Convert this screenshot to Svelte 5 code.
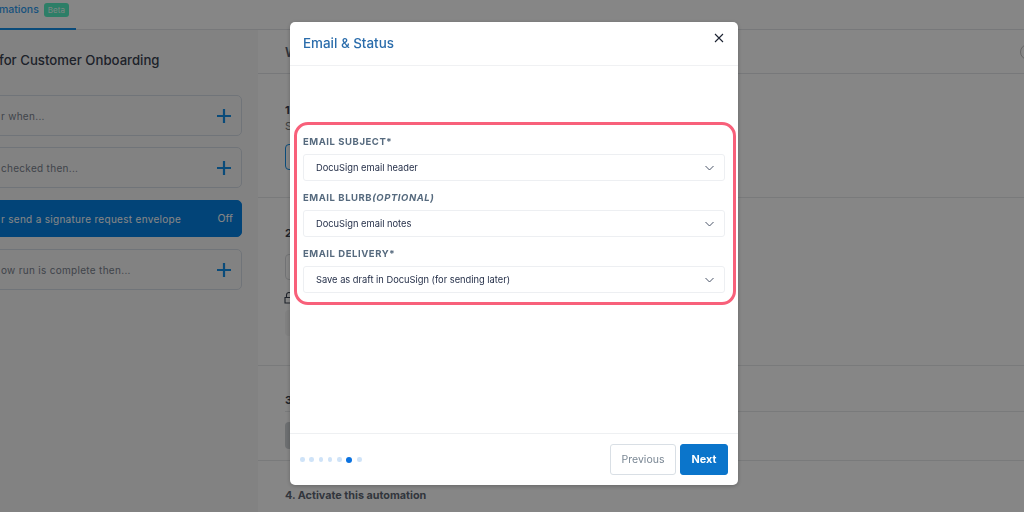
<script>
	const fields = [
		{ label: 'EMAIL SUBJECT*', value: 'DocuSign email header' },
		{ label: 'EMAIL BLURB', note: '(OPTIONAL)', value: 'DocuSign email notes' },
		{ label: 'EMAIL DELIVERY*', value: 'Save as draft in DocuSign (for sending later)' }
	];

	const rows = [
		{ text: 'r when...' },
		{ text: 'checked then...' },
		{ text: 'r send a signature request envelope', active: true },
		{ text: 'ow run is complete then...' }
	];

	const dots = [0, 1, 2, 3, 4, 5, 6];
	let current = $state(5);
</script>

<div class="page">
	<header class="tabs">
		<div class="tab">
			<span class="tab-name">mations</span>
			<span class="beta">Beta</span>
		</div>
	</header>

	<div class="columns">
		<aside class="side">
			<h2 class="side-title">for Customer Onboarding</h2>
			<div class="steps">
				{#each rows as row}
					<div class="step" class:active={row.active}>
						<span class="step-text">{row.text}</span>
						{#if row.active}
							<span class="off">Off</span>
						{:else}
							<svg class="plus" viewBox="0 0 14 14" width="14" height="14">
								<path d="M7 0v14M0 7h14" stroke="currentColor" stroke-width="2.2" fill="none" />
							</svg>
						{/if}
					</div>
				{/each}
			</div>
		</aside>

		<main class="detail">
			<div class="detail-head">
				<span class="detail-title">W</span>
				<span class="ring"></span>
			</div>
			<section class="block block-1">
				<div class="num">1</div>
				<div class="sub">S</div>
				<div class="box box-blue"></div>
			</section>
			<section class="block block-2">
				<div class="num">2</div>
				<div class="box"></div>
				<svg class="lock" viewBox="0 0 10 12" width="10" height="12">
					<path d="M1 5.5h8v5.5H1zM2.5 5.5V3a2.5 2.5 0 0 1 5 0v2.5" stroke="currentColor" stroke-width="1.1" fill="none" />
				</svg>
				<div class="box box-grey"></div>
			</section>
			<section class="block block-3">
				<div class="num">3</div>
				<div class="rule"></div>
				<div class="box box-dark"></div>
			</section>
			<section class="block block-4">
				<div class="activate">4. Activate this automation</div>
			</section>
		</main>
	</div>
</div>

<div class="overlay">
	<div class="modal">
		<div class="modal-head">
			<h1 class="modal-title">Email &amp; Status</h1>
			<button class="close" aria-label="Close">
				<svg viewBox="0 0 10 10" width="10" height="10">
					<path d="M1 1l8 8M9 1l-8 8" stroke="#1d2433" stroke-width="1.1" fill="none" />
				</svg>
			</button>
		</div>

		<div class="modal-body">
			<div class="highlight">
				{#each fields as field}
					<div class="field">
						<div class="label">{field.label}{#if field.note}<em>{field.note}</em>{/if}</div>
						<div class="select">
							<span>{field.value}</span>
							<svg viewBox="0 0 9 6" width="9" height="6">
								<path d="M0.5 1l4 4 4-4" stroke="#4a5568" stroke-width="1" fill="none" />
							</svg>
						</div>
					</div>
				{/each}
			</div>
		</div>

		<div class="modal-foot">
			<div class="dots">
				{#each dots as dot}
					<span class="dot" class:current={dot === current}></span>
				{/each}
			</div>
			<div class="actions">
				<button class="btn prev">Previous</button>
				<button class="btn next">Next</button>
			</div>
		</div>
	</div>
</div>

<style>
	:global(body) {
		margin: 0;
		background: #fff;
		font-family: Inter, 'Liberation Sans', sans-serif;
		overflow: hidden;
	}

	.page {
		width: 1024px;
		height: 512px;
		overflow: hidden;
		display: flex;
		flex-direction: column;
	}

	.tabs {
		height: 29px;
		border-bottom: 1px solid #e2e4e8;
		display: flex;
		flex-shrink: 0;
	}

	.tab {
		width: 76px;
		height: 30px;
		box-sizing: border-box;
		border-bottom: 2px solid #148fe8;
		display: flex;
		align-items: flex-start;
		gap: 5px;
		padding-top: 2px;
	}

	.tab-name {
		font-size: 10.5px;
		line-height: 15px;
		color: #2f9bee;
		font-weight: 500;
		margin-left: -1px;
	}

	.beta {
		background: #56f0c4;
		color: #f0fffa;
		font-size: 8px;
		line-height: 14px;
		padding: 0 4px;
		border-radius: 3px;
		margin-top: 1px;
	}

	.columns {
		flex: 1;
		display: flex;
		min-height: 0;
	}

	.side {
		width: 258px;
		flex-shrink: 0;
		background: #f8f8f8;
		padding-top: 20px;
		box-sizing: border-box;
	}

	.side-title {
		margin: 0 0 25px -1px;
		font-size: 13.2px;
		line-height: 20px;
		font-weight: 500;
		color: #3a4250;
		white-space: nowrap;
	}

	.steps {
		display: flex;
		flex-direction: column;
		gap: 11px;
		width: 242px;
	}

	.step {
		height: 41px;
		box-sizing: border-box;
		margin-left: -10px;
		border: 1px solid #d6dde6;
		border-radius: 5px;
		display: flex;
		align-items: center;
		justify-content: space-between;
		padding: 0 10px;
		color: #148fe8;
	}

	.step.active {
		background: #0582e4;
		border-color: #0582e4;
		height: 37px;
		margin-top: 1px;
		margin-bottom: 1px;
		color: #fff;
		padding-right: 8px;
	}

	.step-text {
		font-size: 10px;
		letter-spacing: 0.3px;
		color: #7a828e;
		white-space: nowrap;
	}

	.active .step-text {
		color: #fff;
	}

	.off {
		font-size: 10.5px;
	}

	.detail {
		flex: 1;
		min-width: 0;
		display: flex;
		flex-direction: column;
		padding-left: 27px;
		color: #3a4250;
	}

	.detail-head {
		height: 43px;
		border-bottom: 1px solid #e2e4e8;
		margin-left: -27px;
		padding: 0 0 0 27px;
		display: flex;
		align-items: center;
		justify-content: space-between;
	}

	.detail-title {
		font-size: 13px;
		font-weight: 600;
		color: #5a6372;
	}

	.ring {
		width: 14px;
		height: 14px;
		border: 1px solid #c4c4c4;
		border-radius: 50%;
		margin-right: -12px;
	}

	.block {
		border-bottom: 1px solid #e6e8ea;
		margin-left: -27px;
		padding-left: 27px;
		box-sizing: border-box;
	}

	.block-1 {
		height: 124px;
		padding-top: 29px;
	}

	.block-2 {
		height: 168px;
		padding-top: 28px;
	}

	.block-3 {
		height: 95px;
		padding-top: 27px;
	}

	.block-4 {
		border: 0;
		padding-top: 28px;
	}

	.num,
	.sub {
		font-size: 11px;
		line-height: 14px;
		font-weight: 700;
	}

	.sub {
		font-weight: 400;
		color: #777;
		margin-top: 2px;
	}

	.box {
		height: 26px;
		width: 300px;
		border: 1px solid #d8dadd;
		border-radius: 4px;
		box-sizing: border-box;
	}

	.box-blue {
		margin-top: 11px;
		border-color: #148fe8;
	}

	.block-2 .box {
		margin-top: 14px;
	}

	.lock {
		display: block;
		margin-top: 12px;
		margin-left: -1px;
		color: #3a4250;
	}

	.block-2 .box-grey {
		margin-top: 6px;
		background: #f4f4f4;
		border: 0;
	}

	.rule {
		height: 1px;
		background: #e6e8ea;
		margin-top: 4px;
	}

	.box-dark {
		margin-top: 10px;
		height: 27px;
		background: #cfd3d6;
		border: 0;
	}

	.activate {
		font-size: 10.8px;
		line-height: 14px;
		font-weight: 700;
		color: #5f6875;
	}

	.overlay {
		position: fixed;
		inset: 0;
		background: rgba(0, 0, 0, 0.475);
	}

	.modal {
		position: absolute;
		left: 290px;
		top: 22px;
		width: 448px;
		height: 463px;
		background: #fff;
		border-radius: 5px;
		display: flex;
		flex-direction: column;
		box-shadow: 0 1px 4px rgba(0, 0, 0, 0.25);
		overflow: hidden;
	}

	.modal-head {
		height: 44px;
		box-sizing: border-box;
		border-bottom: 1px solid #f0f1f3;
		display: flex;
		justify-content: space-between;
		padding: 12px 14px 0 13px;
		flex-shrink: 0;
	}

	.modal-title {
		margin: 0;
		font-size: 13.4px;
		line-height: 19px;
		font-weight: 500;
		color: #2a6cab;
	}

	.close {
		background: none;
		border: 0;
		padding: 0;
		height: 10px;
		display: flex;
		margin-top: -1px;
	}

	.modal-body {
		flex: 1;
		padding: 56px 2px 0 4px;
	}

	.highlight {
		height: 183px;
		box-sizing: border-box;
		border: 3px solid #f8607a;
		border-radius: 14px;
		padding: 10px 8px 0 6px;
		display: flex;
		flex-direction: column;
		gap: 10px;
	}

	.label {
		font-size: 9.5px;
		line-height: 13px;
		font-weight: 700;
		letter-spacing: 0.55px;
		color: #566a7e;
		margin-bottom: 6px;
	}

	.label em {
		font-style: italic;
	}

	.select {
		height: 27px;
		box-sizing: border-box;
		border: 1px solid #edeff2;
		border-radius: 3px;
		display: flex;
		align-items: center;
		justify-content: space-between;
		padding: 0 10px 0 12px;
		font-size: 9.3px;
		color: #1f2a44;
	}

	.modal-foot {
		height: 52px;
		box-sizing: border-box;
		border-top: 1px solid #eef0f2;
		display: flex;
		align-items: center;
		justify-content: space-between;
		padding: 0 10px;
		flex-shrink: 0;
	}

	.dots {
		display: flex;
		align-items: center;
		gap: 4.8px;
	}

	.dot {
		width: 4.5px;
		height: 4.5px;
		border-radius: 50%;
		background: #cfe3f8;
	}

	.dot.current {
		width: 6px;
		height: 6px;
		background: #0a72e0;
	}

	.actions {
		display: flex;
		gap: 4px;
	}

	.btn {
		height: 31px;
		box-sizing: border-box;
		border-radius: 3px;
		font-family: inherit;
		font-size: 10.5px;
		padding: 0;
	}

	.prev {
		width: 66px;
		background: #fff;
		border: 1px solid #d9dfe5;
		color: #7a8794;
	}

	.next {
		width: 48px;
		background: #0b75cb;
		border: 1px solid #0b75cb;
		color: #fff;
		font-weight: 700;
		font-size: 10.8px;
	}
</style>
